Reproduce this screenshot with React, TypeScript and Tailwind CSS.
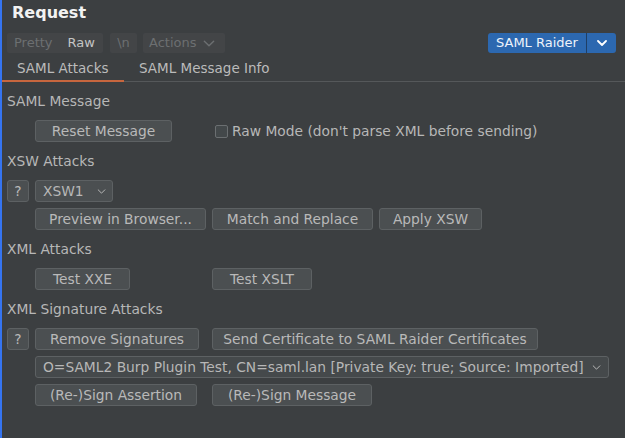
import { ReactNode } from "react";

// Burp Suite / SAML Raider request editor tab, Darcula look

const Chevron = ({ className }: { className?: string }) => (
  <svg viewBox="0 0 10 6" className={className} fill="none" stroke="currentColor" strokeWidth="1.2">
    <path d="M1 1 L5 5 L9 1" strokeLinecap="round" strokeLinejoin="round" />
  </svg>
);

const Btn = ({ children, className = "" }: { children: ReactNode; className?: string }) => (
  <div
    className={`flex h-[22px] items-center justify-center whitespace-nowrap rounded-[3px] border border-[#5d6163] bg-[#4b4f51] text-[#b9b9b9] ${className}`}
  >
    {children}
  </div>
);

const Label = ({ children }: { children: ReactNode }) => (
  <div className="col-span-4 h-[26px] whitespace-nowrap leading-[26px] text-[#b7b7b7]">{children}</div>
);

export default function App() {
  return (
    <div className="flex h-[438px] w-[625px] overflow-hidden bg-[#3c3f41] font-['DejaVu_Sans',sans-serif] text-[13.8px] text-[#b7b7b7]">
      <div className="w-[2px] shrink-0 bg-[#3574f0]" />
      <div className="flex min-w-0 flex-1 flex-col">
        {/* title */}
        <div className="h-[33px] pl-[10px] pt-[3px] text-[16px] font-bold leading-[19px] text-[#f2f2f2]">
          Request
        </div>

        {/* toolbar */}
        <div className="flex h-[20px] items-stretch pl-[5px] pr-[9px] text-[13px]">
          <div className="flex w-[96px] items-center gap-[15px] rounded-[2px] bg-[#434547] px-[7px]">
            <span className="text-[#6c6f71]">Pretty</span>
            <span className="text-[#c4c4c4]">Raw</span>
          </div>
          <div className="ml-[7px] flex w-[27px] items-center justify-center rounded-[2px] bg-[#434547] text-[#6c6f71]">
            \n
          </div>
          <div className="ml-[6px] flex w-[82px] items-center gap-[6px] rounded-[2px] bg-[#434547] pl-[6px] text-[#6c6f71]">
            <span>Actions</span>
            <Chevron className="h-[7px] w-[12px]" />
          </div>
          <div className="ml-auto flex items-stretch">
            <div className="flex w-[98px] items-center rounded-l-[3px] bg-[#2c68b0] pl-[8px] text-[#eef3fa]">
              SAML Raider
            </div>
            <div className="w-px bg-[#1f3f66]" />
            <div className="flex w-[29px] items-center justify-center rounded-r-[3px] bg-[#2c68b0] text-white">
              <svg viewBox="0 0 10 6" className="h-[6px] w-[10px]" fill="none" stroke="currentColor" strokeWidth="1.8">
                <path d="M1 1 L5 5 L9 1" strokeLinecap="round" strokeLinejoin="round" />
              </svg>
            </div>
          </div>
        </div>

        {/* tabs */}
        <div className="mt-[3px] flex h-[26px] text-[13.5px]">
          <div className="flex w-[122px] items-center border-b-2 border-[#c7663e] pl-[15px] text-[#bbbbbb]">
            SAML Attacks
          </div>
          <div className="flex items-center border-b border-[#55585a] px-[15px] text-[#bbbbbb]">
            SAML Message Info
          </div>
          <div className="flex-1 border-b border-[#55585a]" />
        </div>

        {/* content */}
        <div className="grid grid-cols-[22px_171px_161px_1fr] gap-x-[6px] gap-y-[6px] pl-[5px] pr-[16px] pt-[6px]">
          <Label>SAML Message</Label>

          <div />
          <Btn className="w-[137px]">Reset Message</Btn>
          <div className="col-span-2 flex h-[22px] items-center gap-[4px] whitespace-nowrap">
            <div className="ml-[3px] h-[13px] w-[13px] rounded-[2px] border border-[#6b6f71] bg-[#43484a]" />
            <span>Raw Mode (don't parse XML before sending)</span>
          </div>

          <Label>XSW Attacks</Label>

          <Btn>?</Btn>
          <div className="col-span-3 flex">
            <div className="flex h-[22px] w-[78px] items-center justify-between rounded-[3px] border border-[#5d6163] bg-[#4b4f51] pl-[7px] pr-[6px]">
              <span>XSW1</span>
              <Chevron className="h-[5px] w-[9px]" />
            </div>
          </div>

          <div />
          <Btn className="w-[171px]">Preview in Browser...</Btn>
          <Btn className="w-[161px]">Match and Replace</Btn>
          <Btn className="w-[103px]">Apply XSW</Btn>

          <Label>XML Attacks</Label>

          <div />
          <Btn className="w-[95px]">Test XXE</Btn>
          <div className="col-span-2">
            <Btn className="w-[100px]">Test XSLT</Btn>
          </div>

          <Label>XML Signature Attacks</Label>

          <Btn>?</Btn>
          <Btn className="w-[164px]">Remove Signatures</Btn>
          <div className="col-span-2">
            <Btn className="w-[326px]">Send Certificate to SAML Raider Certificates</Btn>
          </div>

          <div />
          <div className="col-span-3 flex h-[22px] items-center justify-between rounded-[3px] border border-[#5d6163] bg-[#45494b] pl-[7px] pr-[7px]">
            <span className="whitespace-nowrap">
              O=SAML2 Burp Plugin Test, CN=saml.lan [Private Key: true; Source: Imported]
            </span>
            <Chevron className="h-[5px] w-[9px]" />
          </div>

          <div />
          <Btn className="w-[162px]">(Re-)Sign Assertion</Btn>
          <div className="col-span-2">
            <Btn className="w-[160px]">(Re-)Sign Message</Btn>
          </div>
        </div>
      </div>
    </div>
  );
}
